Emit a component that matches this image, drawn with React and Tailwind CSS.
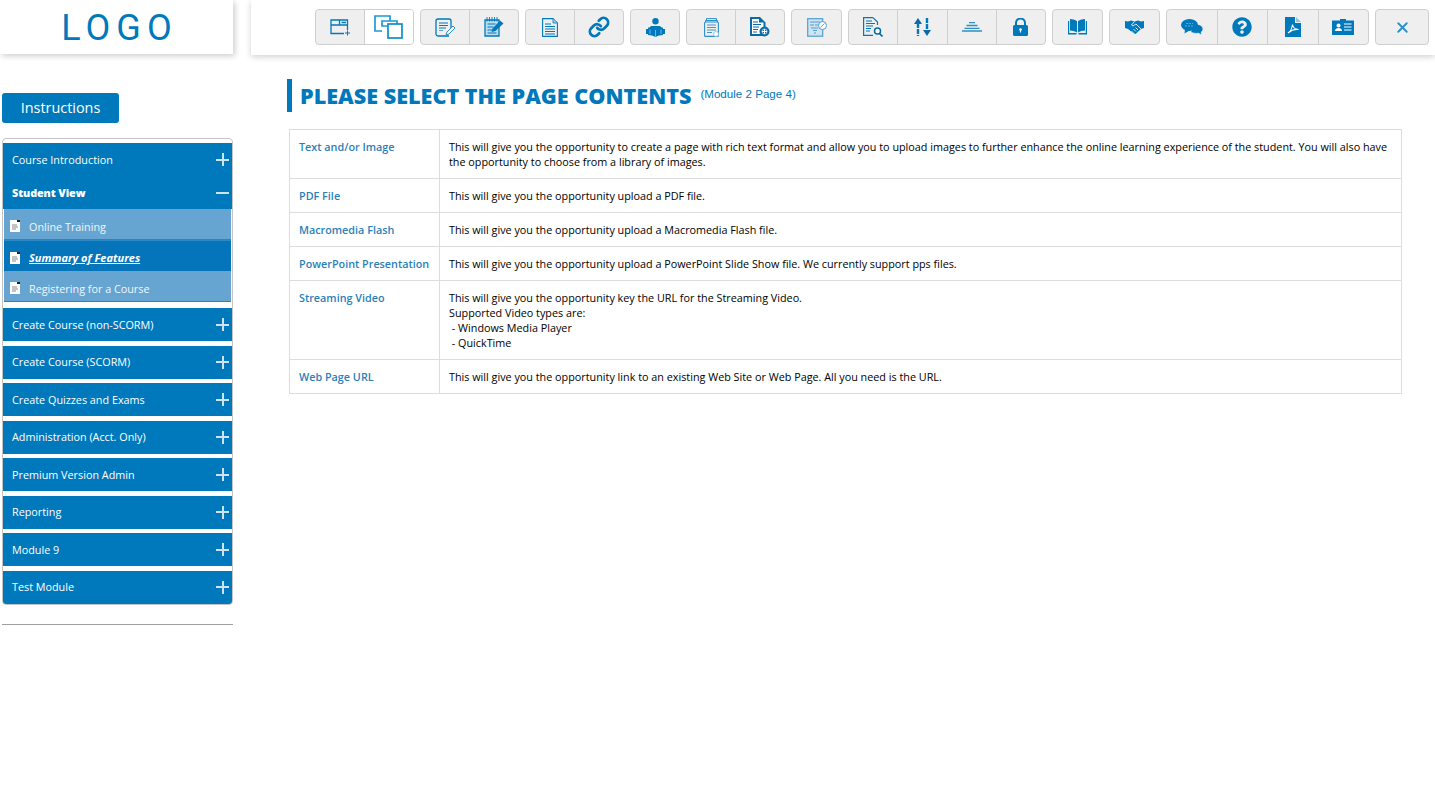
import { FaQuestionCircle } from 'react-icons/fa';
import { Link, X } from 'lucide-react';

const BLUE = '#0079bc';

function WindowAdd() {
  return (
    <svg width="21" height="17" viewBox="0 0 21 17" fill="none" stroke={BLUE} strokeWidth="1.3">
      <path d="M17.500 11V1H1v13.500h13" />
      <path d="M1 6h16.500M9.500 1v5M11.500 3.500h4.500" />
      <path d="M17.500 11.500v5M15 14h5" strokeWidth="1" />
    </svg>
  );
}

function Copies() {
  return (
    <svg width="30" height="24" viewBox="0 0 30 24" fill="none" stroke="#1a9ad6" strokeWidth="1.700">
      <path d="M8 16H1V1h15v5" />
      <path d="M13 11H8V6h15v5" />
      <rect x="14" y="9" width="14" height="14" fill="#fff" stroke="#0f8cc6" />
    </svg>
  );
}

function DocPencil() {
  return (
    <svg width="21" height="19" viewBox="0 0 21 19" fill="none" stroke={BLUE}>
      <path d="M14 18H3a2 2 0 0 1-2-2V3a2 2 0 0 1 2-2h11a2 2 0 0 1 2 2v8" strokeWidth="1.300" />
      <path d="M4 5h9M4 7.500h9M4 10h7" strokeWidth="1.200" />
      <path d="M4 12.500h4" stroke="#5ba4d4" strokeWidth="1.200" />
      <path d="M11 17l1-3 6-6 2 2-6 6z" fill="#fff" stroke="#2d8dc6" />
    </svg>
  );
}

function Notepad() {
  return (
    <svg width="20" height="20" viewBox="0 0 20 20" fill="none" stroke={BLUE}>
      <path d="M1 3h14v16H1z" fill="#bcdcef" strokeWidth="1.300" />
      <path d="M3 0v4.500M5.500 0v4.500M8 0v4.500M10.500 0v4.500M13 0v4.500" strokeWidth="0.900" />
      <path d="M3.500 7h8M3.500 10h6M3.500 13h5M3.500 16h9" strokeWidth="1.200" />
      <path d="M7.500 15l1-3.500 7.500-8 3.500 3-8 7.500z" fill={BLUE} stroke="none" />
    </svg>
  );
}

function PageLines() {
  return (
    <svg width="16" height="19" viewBox="0 0 16 19" fill="none" stroke={BLUE}>
      <path d="M11 .6H.6v17.800h14.800V5z" strokeWidth="1.100" />
      <path d="M11 .6V5h4.400" fill="#9ccbe6" strokeWidth="0.800" />
      <path d="M3 6h6M3 8.500h10M3 11h10M3 13.500h10M3 16h10" strokeWidth="1" />
    </svg>
  );
}

function Reader() {
  return (
    <svg width="19" height="19" viewBox="0 0 19 19">
      <circle cx="9.500" cy="3.200" r="3.200" fill={BLUE} />
      <path d="M5 8h9l2 2v2H3v-2z" fill={BLUE} />
      <path d="M2 9.500c2.500 0 5.500.7 7.500 2 2-1.300 5-2 7.500-2V17c-2.500 0-5.500.7-7.500 2-2-1.300-5-2-7.500-2z" fill={BLUE} />
      <path d="M0 11h2v5H0zM17 11h2v5h-2z" fill={BLUE} />
      <path d="M9.500 12v6.500M4 11.500v4.500M15 11.500v4.500" stroke="#8fc3e2" strokeWidth=".8" />
    </svg>
  );
}

function Stacked() {
  return (
    <svg width="15" height="19" viewBox="0 0 15 19" fill="none" stroke="#2b8ec6">
      <path d="M2.500 2V.6h10V2" strokeWidth="1" />
      <path d="M1.500 4V2.500h12V4" strokeWidth="1" />
      <rect x=".6" y="4" width="13.800" height="14.400" rx="1" strokeWidth="1.100" />
      <path d="M3 7h9M3 9.500h9M3 12h9M3 14.500h5" stroke="#3f97cc" strokeWidth="1" />
      <circle cx="12" cy="16" r="2.500" fill="#fff" stroke="#8cbfdf" strokeWidth="0.800" />
    </svg>
  );
}

function DocPlus() {
  return (
    <svg width="20" height="20" viewBox="0 0 20 20" fill="none">
      <path d="M0 0h10l5.500 5.500V19H0z" fill="#0a6aa8" />
      <path d="M2 2h7v3.500h4.500V17H2z" fill="#fff" />
      <path d="M3 5h5M3 7.500h8M3 10h6M3 12.500h5M3 15h4" stroke="#0a6aa8" />
      <circle cx="14.500" cy="14.500" r="5" fill="#0a6aa8" />
      <circle cx="14.500" cy="14.500" r="2.500" fill="none" stroke="#d8e9f4" strokeWidth=".8" />
      <path d="M14.500 12v5M12 14.500h5" stroke="#fff" />
    </svg>
  );
}

function FormCheck() {
  return (
    <svg width="20" height="19" viewBox="0 0 20 19" fill="none" stroke="#4f9fd0">
      <rect x=".7" y=".7" width="15" height="17.500" fill="#cfe3f1" strokeWidth="1.200" />
      <path d="M3 4h10M3 7h4M8 7h5M4 10h7M6 12.500h4M7 15h2" strokeWidth="1.100" />
      <circle cx="15.500" cy="7.500" r="4" fill="#fff" />
      <path d="M13.500 9.500l4-4" />
    </svg>
  );
}

function DocSearch() {
  return (
    <svg width="20" height="20" viewBox="0 0 20 20" fill="none" stroke={BLUE}>
      <path d="M10 .6H.6v17.800H10M10 .6l4.500 4.500V8" strokeWidth="1.200" />
      <path d="M3 4h6M3 6.500h9M3 9h7M3 11.500h5M3 14h4" strokeWidth="1.100" />
      <circle cx="14.500" cy="14" r="3" fill="#fff" strokeWidth="1.500" stroke="#0a6aa8" />
      <path d="M16.500 16.500l3 3" strokeWidth="1.700" stroke="#0a6aa8" />
    </svg>
  );
}

function UpDown() {
  return (
    <svg width="17" height="18" viewBox="0 0 17 18" fill="none">
      <path d="M4 0l4 6H0z" fill="#0a6aa8" />
      <path d="M4 5v13" stroke={BLUE} strokeWidth="2.400" strokeDasharray="5 1" />
      <path d="M13 0v13" stroke={BLUE} strokeWidth="2.400" strokeDasharray="5 1" />
      <path d="M9 12h8l-4 6z" fill="#0a6aa8" />
    </svg>
  );
}

function Layers() {
  return (
    <svg width="20" height="10" viewBox="0 0 20 10" fill="none" stroke="#2b8ec6" strokeWidth="1.300">
      <path d="M7 .7h6M4.500 3.500h11M2.500 6.300h15" />
      <path d="M0 9h20" strokeWidth="1.600" />
    </svg>
  );
}

function Lock() {
  return (
    <svg width="15" height="18" viewBox="0 0 15 18">
      <path d="M3 8V5a4.500 4.500 0 0 1 9 0v3" fill="none" stroke={BLUE} strokeWidth="2" />
      <rect y="7" width="15" height="11" rx="1.500" fill={BLUE} />
      <circle cx="7.500" cy="11.500" r="1.300" fill="#fff" />
      <path d="M6.900 12h1.200v2.500H6.900z" fill="#fff" />
    </svg>
  );
}

function Book() {
  return (
    <svg width="19" height="16" viewBox="0 0 19 16">
      <path d="M0 2h1.200v12h7.300v1.500H0z" fill={BLUE} />
      <path d="M19 2h-1.200v12h-7.300v1.500H19z" fill={BLUE} />
      <path d="M2 0c2.500 0 5 .7 7 2v11.500c-2-1.300-4.500-2-7-2z" fill={BLUE} />
      <path d="M17 0c-2.500 0-5 .7-7 2v11.500c2-1.300 4.500-2 7-2z" fill={BLUE} />
    </svg>
  );
}

function Shake() {
  return (
    <svg width="19" height="14" viewBox="0 0 19 14">
      <path d="M0 1l3 .5L6 .5l3.500 1L13 .5l3 1L19 1v7l-3 1-5.500 5-3-1.500L3 9 0 8z" fill={BLUE} />
      <path d="M9.500 1.500L6.500 5l1.500 1 3-2 5 5M8.500 13l-2-2M11 11.500L8.500 9M13 10l-2.500-2.500" fill="none" stroke="#eaf3f9" strokeWidth=".9" />
    </svg>
  );
}

function Chat() {
  return (
    <svg width="22" height="16" viewBox="0 0 22 16">
      <path d="M14 5c4 0 8 1.800 8 5 0 1.400-.8 2.400-1.800 3.200l.6 2.800-3.500-1.800c-2.500.5-6 .2-7.500-1.500z" fill={BLUE} stroke="#efefef" strokeWidth=".8" />
      <ellipse cx="8.500" cy="6" rx="8.500" ry="6" fill={BLUE} />
      <path d="M4 10l-.5 4.500 5-3z" fill={BLUE} />
      <path d="M5 4.500h7M4 7h9" stroke="#5aa7d5" strokeDasharray="2 1" />
    </svg>
  );
}

function Pdf() {
  return (
    <svg width="16" height="20" viewBox="0 0 16 20">
      <path d="M0 0h10v6h6v14H0z" fill={BLUE} />
      <path d="M11 0l5 5h-5z" fill="#8fc3e2" />
      <path d="M3 16c2-1 4-5 4.500-8.500.5 3 2.500 5 6 5-3.500-.5-7 .5-10.500 3.500z" fill="none" stroke="#fff" strokeWidth="1.100" />
    </svg>
  );
}

function IdCard() {
  return (
    <svg width="22" height="16" viewBox="0 0 22 16">
      <path d="M0 1.500h8V0h6v1.500h8V16H0z" fill={BLUE} />
      <circle cx="6.500" cy="6.500" r="2" fill="#fff" />
      <path d="M3 12c0-2 1.500-3 3.500-3s3.500 1 3.500 3z" fill="#fff" />
      <path d="M12 5h7.500M12 8h7.500M12 11h7.500" stroke="#fff" />
    </svg>
  );
}

const groups = [
  { w: 'w-[99px]', cells: [{ icon: <WindowAdd /> }, { icon: <Copies />, active: true }] },
  { w: 'w-[99px]', cells: [{ icon: <DocPencil /> }, { icon: <Notepad /> }] },
  { w: 'w-[99px]', cells: [{ icon: <PageLines /> }, { icon: <Link size={22} strokeWidth={3} color={BLUE} /> }] },
  { w: 'w-[50px]', cells: [{ icon: <Reader /> }] },
  { w: 'w-[99px]', cells: [{ icon: <Stacked /> }, { icon: <DocPlus /> }] },
  { w: 'w-[51px]', cells: [{ icon: <FormCheck /> }] },
  { w: 'w-[198px]', cells: [{ icon: <DocSearch /> }, { icon: <UpDown /> }, { icon: <Layers /> }, { icon: <Lock /> }] },
  { w: 'w-[51px]', cells: [{ icon: <Book /> }] },
  { w: 'w-[51px]', cells: [{ icon: <Shake /> }] },
  { w: 'w-[203px]', cells: [{ icon: <Chat /> }, { icon: <FaQuestionCircle size={20} color={BLUE} /> }, { icon: <Pdf /> }, { icon: <IdCard /> }] },
  { w: 'w-[54px]', cells: [{ icon: <X size={17} strokeWidth={2.600} color="#2b8ec6" /> }] },
];

const rows = [
  ['Text and/or Image', ['This will give you the opportunity to create a page with rich text format and allow you to upload images to further enhance the online learning experience of the student. You will also have the opportunity to choose from a library of images.']],
  ['PDF File', ['This will give you the opportunity upload a PDF file.']],
  ['Macromedia Flash', ['This will give you the opportunity upload a Macromedia Flash file.']],
  ['PowerPoint Presentation', ['This will give you the opportunity upload a PowerPoint Slide Show file. We currently support pps files.']],
  ['Streaming Video', ['This will give you the opportunity key the URL for the Streaming Video.', 'Supported Video types are:', '\u00a0- Windows Media Player', '\u00a0- QuickTime']],
  ['Web Page URL', ['This will give you the opportunity link to an existing Web Site or Web Page. All you need is the URL.']],
];

const modules = ['Create Course (non-SCORM)', 'Create Course (SCORM)', 'Create Quizzes and Exams', 'Administration (Acct. Only)', 'Premium Version Admin', 'Reporting', 'Module 9', 'Test Module'];

function Sign({ minus }) {
  return (
    <span className="relative w-[13px] h-[13px] shrink-0">
      <span className="absolute left-0 top-[5.500px] w-[13px] h-[2px] bg-[#cfe4f2]" />
      {!minus && <span className="absolute left-[5.500px] top-0 h-[13px] w-[2px] bg-[#cfe4f2]" />}
    </span>
  );
}

function Header({ label, minus, bold }) {
  return (
    <div className="h-[33px] flex items-center justify-between pl-[9px] pr-[3px] bg-[#0079bc] text-white">
      <span className={bold ? 'pt-[1px] text-[10.800px] font-extrabold tracking-[-0.1px]' : 'pt-[1px] text-[10.800px]'}>{label}</span>
      <Sign minus={minus} />
    </div>
  );
}

function PageIcon() {
  return (
    <svg width="10" height="12" viewBox="0 0 10 12" className="shrink-0 mt-[3px]">
      <path d="M0 0h7v2h3v10H0z" fill="#fff" />
      <path d="M7 0h3v2H7z" fill="#222" />
      <path d="M2 5h5M2 7h6M2 9h4" stroke="#888" />
    </svg>
  );
}

function SubItem({ label, active }) {
  return (
    <div className={active ? 'h-[31px] flex items-center gap-[9px] pl-[6px] mx-[1px] bg-[#0575bb] border-t border-[#2b8ac6] text-white' : 'h-[31px] flex items-center gap-[9px] pl-[6px] mx-[1px] bg-[#66a4d2] border-b border-[#2b83c2] text-[#f2f7fb]'}>
      <PageIcon />
      <span className={active ? 'pt-[5px] text-[11px] font-bold italic underline' : 'pt-[6px] text-[10.800px]'}>{label}</span>
    </div>
  );
}

export default function App() {
  return (
    <div className="min-h-[808px] bg-white font-['Open_Sans',sans-serif]">
      <header className="flex items-start gap-[18px] h-[55px]">
        <div className="w-[233px] h-[54px] shrink-0 bg-white shadow-[2px_2px_6px_rgba(0,0,0,0.2)] flex items-center justify-center pl-[6px] pt-[1px] text-[36px] leading-none tracking-[6px] text-[#0079bc] font-['Roboto',sans-serif]">
          LOGO
        </div>
        <div className="flex-1 h-[55px] bg-white shadow-[0_2px_6px_rgba(0,0,0,0.18)] flex justify-end gap-[6px] pt-[9px] pr-[6px]">
          {groups.map((group, i) => (
            <div key={i} className={`${group.w} flex h-[36px] rounded-[4px] border border-[#cfcfcf] bg-[#efefef] overflow-hidden`}>
              {group.cells.map((cell, j) => (
                <div key={j} className={`flex-1 flex items-center justify-center ${j > 0 ? 'border-l border-[#cfcfcf]' : ''} ${cell.active ? 'bg-white' : ''}`}>
                  {cell.icon}
                </div>
              ))}
            </div>
          ))}
        </div>
      </header>

      <div className="flex">
        <aside className="w-[231px] ml-[2px] shrink-0 pt-[38px]">
          <button className="w-[117px] h-[30px] rounded-[3px] bg-[#0079bc] text-white text-[14.400px]">Instructions</button>
          <div className="mt-[15px] border border-[#c4c4c4] rounded-[4px] pt-[4px] overflow-hidden">
            <Header label="Course Introduction" />
            <Header label="Student View" minus bold />
            <SubItem label="Online Training" />
            <SubItem label="Summary of Features" active />
            <SubItem label="Registering for a Course" />
            <div className="flex flex-col gap-[4.500px] pt-[6px]">
              {modules.map((m) => <Header key={m} label={m} />)}
            </div>
          </div>
          <div className="mt-[19.500px] border-t border-[#a0a0a0]" />
        </aside>

        <main className="flex-1 pl-[54px] pr-[33px] pt-[24px]">
          <div className="flex items-start border-l-[5px] border-[#0079bc] h-[33px] pl-[8px]">
            <h1 className="text-[21.600px] leading-[33px] font-extrabold text-[#0079bc] uppercase">Please select the page contents</h1>
            <span className="ml-[9px] mt-[8px] text-[11.600px] leading-[14px] text-[#0079bc] font-['Liberation_Sans',sans-serif]">(Module 2 Page 4)</span>
          </div>
          <table className="mt-[17px] ml-[2px] w-[1113px] border-collapse text-[10.800px] leading-[15px]">
            <tbody>
              {rows.map(([name, text]) => (
                <tr key={name}>
                  <td className="w-[150px] align-top border border-[#dddddd] pl-[9px] pr-[8px] pt-[9px] pb-[9px] font-semibold text-[#2a7fba]">{name}</td>
                  <td className="align-top border border-[#dddddd] pl-[9px] pr-[9px] pt-[9px] pb-[9px] text-black">
                    {text.map((line) => <div key={line}>{line}</div>)}
                  </td>
                </tr>
              ))}
            </tbody>
          </table>
        </main>
      </div>
    </div>
  );
}
